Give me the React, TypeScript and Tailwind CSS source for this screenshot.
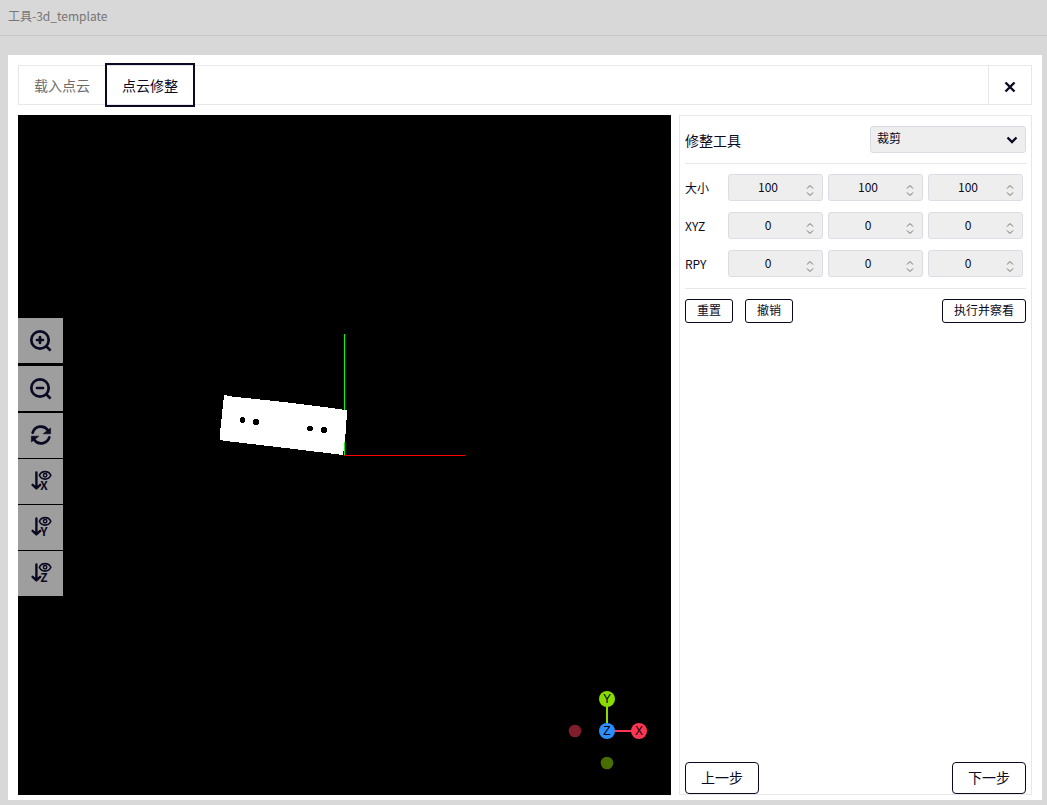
import { useState } from 'react'
import type { ReactNode } from 'react'

type Vector = [number, number, number]

interface ToolButtonProps {
    label: string
    className?: string
    children: ReactNode
}

function ToolButton({ label, className = '', children }: Readonly<ToolButtonProps>) {
    return (
        <button
            type="button"
            aria-label={label}
            className={`flex h-[45px] w-[45px] items-center justify-center bg-[#9e9e9e] pr-px pb-px ${className}`}
        >
            {children}
        </button>
    )
}

function ZoomIcon({ plus = false }: Readonly<{ plus?: boolean }>) {
    return (
        <svg
            width="24"
            height="24"
            viewBox="0 0 24 24"
            fill="none"
            stroke="currentColor"
            strokeWidth="2.7"
            strokeLinecap="round"
        >
            <circle cx="12" cy="12" r="8.7" />
            <path d="M18 18l4.6 4.6" strokeLinecap="butt" />
            <path d="M9 12h6" />
            {plus && <path d="M12 9v6" />}
        </svg>
    )
}

function RefreshIcon() {
    return (
        <svg width="24" height="24" viewBox="0 0 24 24" fill="none">
            <path
                d="M4.7 9.6a8.6 8.6 0 0 1 15.2-2.4M21.3 14.4a8.6 8.6 0 0 1-15.2 2.4"
                stroke="currentColor"
                strokeWidth="2.8"
                strokeLinecap="round"
            />
            <path
                d="M22.6 5v5.8h-7.4zM3.4 19v-5.8h7.4z"
                fill="currentColor"
                stroke="currentColor"
                strokeWidth="0.6"
                strokeLinejoin="round"
            />
        </svg>
    )
}

function AxisViewIcon({ axis }: Readonly<{ axis: string }>) {
    return (
        <svg width="24" height="24" viewBox="0 0 24 24" fill="none" stroke="currentColor">
            <path
                d="M8.4 3.4v15.8M4.6 15.8l3.8 3.6 3.8-3.6"
                strokeWidth="2.4"
                strokeLinecap="round"
                strokeLinejoin="round"
            />
            <path
                d="M11.4 6.3c2-5 9.4-5 11.4 0-2 5-9.4 5-11.4 0z"
                strokeWidth="1.7"
            />
            <circle cx="17.1" cy="6.3" r="1.7" strokeWidth="1.5" />
            <text
                x="16"
                y="21"
                textAnchor="middle"
                fill="currentColor"
                stroke="none"
                fontSize="12"
                fontWeight="bold"
            >
                {axis}
            </text>
        </svg>
    )
}

function PointCloud() {
    return (
        <svg
            viewBox="-326 -340 653 680"
            className="block h-full w-full"
            shapeRendering="crispEdges"
        >
            <rect x="0" y="-121" width="1" height="121" fill="#00ff00" />
            <polygon
                points="-120,-60 -118,-60 -117,-59 -60,-53 -20,-48 2,-45 3,-45 3,-42 1,-14 -1,0 -50,-6 -118,-14 -124,-15 -124,-22"
                fill="#fff"
            />
            <rect x="0" y="-13" width="1" height="13" fill="#00ff00" />
            <rect x="0" y="0" width="121" height="1" fill="#ff0000" />
            <g fill="#000">
                <circle cx="-101.5" cy="-35" r="2.9" />
                <circle cx="-88" cy="-33" r="2.9" />
                <circle cx="-34" cy="-26.5" r="2.9" />
                <circle cx="-20" cy="-25" r="2.9" />
            </g>
        </svg>
    )
}

function AxisGizmo() {
    return (
        <svg
            width="128"
            height="128"
            viewBox="-64 -64 128 128"
            className="absolute right-0 bottom-0"
        >
            <circle cx="-32" cy="0" r="6.3" fill="#801d2b" />
            <circle cx="0" cy="32" r="6.3" fill="#466e00" />
            <path d="M0 0V-32" stroke="#8adb00" strokeWidth="2" />
            <path d="M0 0H32" stroke="#ff3653" strokeWidth="2" />
            <circle cx="0" cy="-32" r="8" fill="#8adb00" />
            <circle cx="32" cy="0" r="8" fill="#ff3653" />
            <circle cx="0" cy="0" r="8" fill="#2c8fff" />
            <g
                fill="#000"
                fontSize="12"
                textAnchor="middle"
                className="font-['Liberation_Sans',sans-serif]"
            >
                <text x="0" y="-28">Y</text>
                <text x="32" y="4">X</text>
                <text x="0" y="4">Z</text>
            </g>
        </svg>
    )
}

interface VectorRowProps {
    label: string
    value: Vector
    onChange: (value: Vector) => void
}

function VectorRow({ label, value, onChange }: Readonly<VectorRowProps>) {
    const update = (index: number, next: number) => {
        const copy: Vector = [...value]
        copy[index] = next
        onChange(copy)
    }

    return (
        <div className="flex items-center">
            <span className="w-[43px] shrink-0 text-xs">{label}</span>
            <div className="mr-[3px] grid flex-1 grid-cols-3 gap-[5px]">
                {value.map((n, i) => (
                    <div key={i} className="relative">
                        <input
                            type="number"
                            aria-label={`${label} ${i + 1}`}
                            value={n}
                            onChange={(e) => update(i, Number(e.target.value))}
                            className="block h-[27px] w-full appearance-none rounded-[3px] border border-[#dcdce4] bg-[#eee] pr-[15px] pb-[2px] text-center text-xs [appearance:textfield] [&::-webkit-inner-spin-button]:appearance-none"
                        />
                        <svg
                            width="8"
                            height="12"
                            viewBox="0 0 8 12"
                            fill="none"
                            stroke="#6c6c6c"
                            className="pointer-events-none absolute top-[10px] right-[9px]"
                        >
                            <path d="M1 4.5l3-3 3 3M1 8.5l3 3 3-3" />
                        </svg>
                    </div>
                ))}
            </div>
        </div>
    )
}

const smallButton = 'h-6 rounded-[3px] border border-[#0a0a23] px-[11px] pb-[2px] text-xs'
const stepButton = 'h-8 rounded border border-[#0a0a23] px-[15px] pb-[2px] text-sm'

export default function App() {
    const [tool, setTool] = useState('crop')
    const [size, setSize] = useState<Vector>([100, 100, 100])
    const [xyz, setXyz] = useState<Vector>([0, 0, 0])
    const [rpy, setRpy] = useState<Vector>([0, 0, 0])

    return (
        <div className="flex min-h-screen flex-col bg-[#d8d8d8] font-['Noto_Sans_CJK_SC',sans-serif] text-[#0a0a23]">
            <header className="flex h-9 items-center border-b border-[#c8c8c8] px-2 pb-1 text-xs text-[#757575]">
                工具-3d_template
            </header>

            <main className="mt-[19px] mr-[5px] mb-[5px] ml-2 flex flex-1 flex-col gap-[10px] bg-white pt-[10px] pr-[10px] pb-[5px] pl-[10px]">
                <nav className="flex h-10 border border-[#e6e6ec] text-sm">
                    <button type="button" className="px-[15px] text-[#6c6c6c]">
                        载入点云
                    </button>
                    <button
                        type="button"
                        className="-my-[3px] border-2 border-[#0a0a23] px-[15px]"
                    >
                        点云修整
                    </button>
                    <button
                        type="button"
                        aria-label="关闭"
                        className="ml-auto flex w-[43px] items-center justify-center border-l border-[#e6e6ec] pt-1"
                    >
                        <svg
                            width="12"
                            height="12"
                            viewBox="0 0 12 12"
                            stroke="currentColor"
                            strokeWidth="2.4"
                        >
                            <path d="M1.5 1.5l9 9M10.5 1.5l-9 9" />
                        </svg>
                    </button>
                </nav>

                <div className="flex flex-1 gap-2">
                    <section className="relative min-w-0 flex-1 bg-black">
                        <div className="absolute inset-0">
                            <PointCloud />
                        </div>
                        <div className="absolute top-[203px] left-0 flex flex-col gap-px">
                            <ToolButton label="放大" className="mb-[2px]">
                                <ZoomIcon plus />
                            </ToolButton>
                            <ToolButton label="缩小" className="mb-px">
                                <ZoomIcon />
                            </ToolButton>
                            <ToolButton label="刷新">
                                <RefreshIcon />
                            </ToolButton>
                            <ToolButton label="X 视图">
                                <AxisViewIcon axis="X" />
                            </ToolButton>
                            <ToolButton label="Y 视图">
                                <AxisViewIcon axis="Y" />
                            </ToolButton>
                            <ToolButton label="Z 视图">
                                <AxisViewIcon axis="Z" />
                            </ToolButton>
                        </div>
                        <AxisGizmo />
                    </section>

                    <aside className="flex w-[353px] shrink-0 flex-col border border-[#e6e6ec] px-[5px] pt-[10px]">
                        <div className="flex items-center justify-between border-b border-[#e6e6ec] pb-[10px]">
                            <label htmlFor="tool" className="text-sm">
                                修整工具
                            </label>
                            <div className="relative">
                                <select
                                    id="tool"
                                    value={tool}
                                    onChange={(e) => setTool(e.target.value)}
                                    className="block h-[27px] w-[156px] appearance-none rounded-[3px] border border-[#dcdce4] bg-[#eee] px-[6px] pb-1 text-xs"
                                >
                                    <option value="crop">裁剪</option>
                                </select>
                                <svg
                                    width="12"
                                    height="12"
                                    viewBox="0 0 12 12"
                                    fill="none"
                                    stroke="currentColor"
                                    strokeWidth="2.4"
                                    className="pointer-events-none absolute top-2 right-2"
                                >
                                    <path d="M1.5 3.5L6 8l4.5-4.5" />
                                </svg>
                            </div>
                        </div>

                        <div className="flex flex-col gap-[11px] border-b border-[#e6e6ec] pt-[10px] pb-[11px]">
                            <VectorRow label="大小" value={size} onChange={setSize} />
                            <VectorRow label="XYZ" value={xyz} onChange={setXyz} />
                            <VectorRow label="RPY" value={rpy} onChange={setRpy} />
                        </div>

                        <div className="flex gap-3 pt-[10px]">
                            <button type="button" className={smallButton}>
                                重置
                            </button>
                            <button type="button" className={smallButton}>
                                撤销
                            </button>
                            <button type="button" className={`ml-auto ${smallButton}`}>
                                执行并察看
                            </button>
                        </div>

                        <div className="mt-auto flex justify-between">
                            <button type="button" className={stepButton}>
                                上一步
                            </button>
                            <button type="button" className={stepButton}>
                                下一步
                            </button>
                        </div>
                    </aside>
                </div>
            </main>
        </div>
    )
}
